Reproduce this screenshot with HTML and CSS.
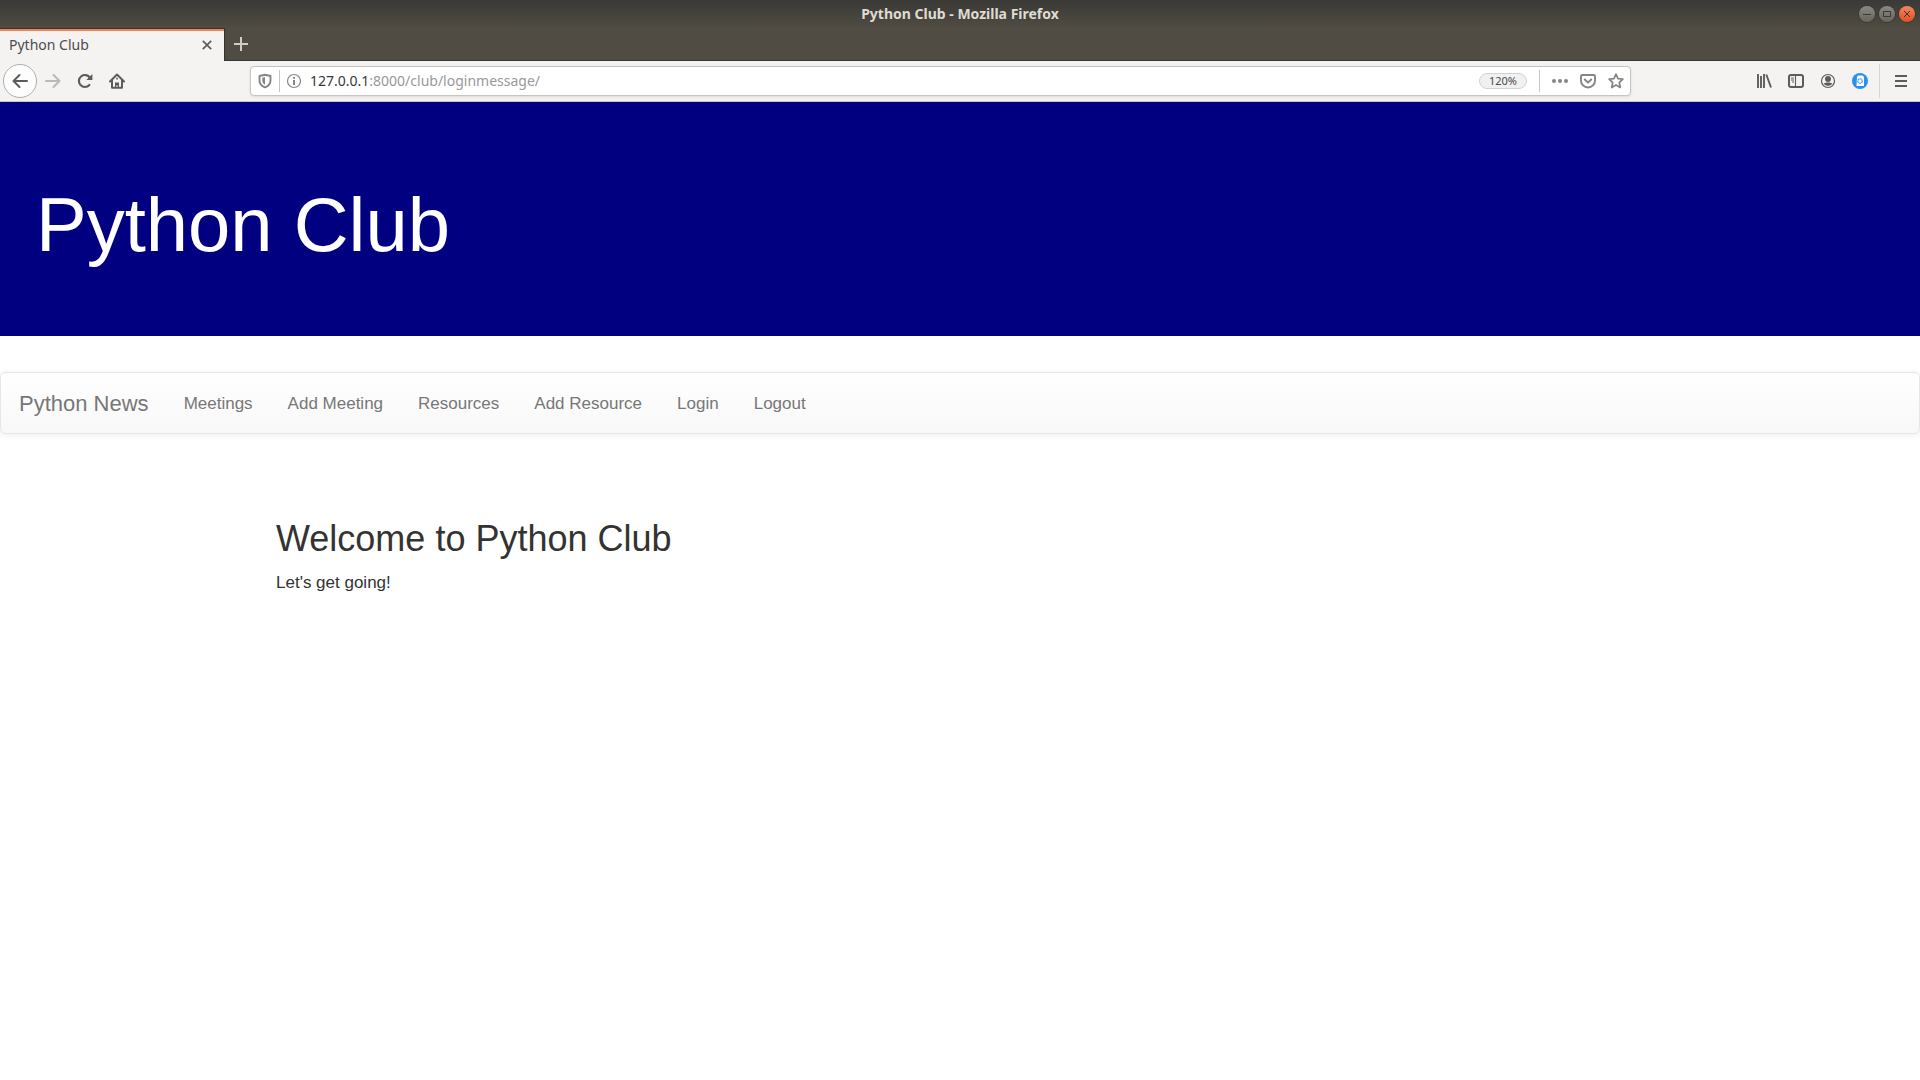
FILE: index.html
```html
<!DOCTYPE html>
<html lang="en">
<head>
<meta charset="utf-8">
<meta name="viewport" content="width=device-width, initial-scale=1">
<title>Python Club</title>
<link rel="stylesheet" href="styles.css">
</head>
<body>
<div class="chrome">
  <div class="titlebar">
    <div class="window-title">Python Club - Mozilla Firefox</div>
    <div class="window-buttons">
      <button class="win" type="button" aria-label="Minimize"><svg viewBox="0 0 16 16"><path d="M4 8.5h8"/></svg></button>
      <button class="win" type="button" aria-label="Maximize"><svg viewBox="0 0 16 16"><path d="M4.5 5.5h7v5h-7z"/></svg></button>
      <button class="win win-close" type="button" aria-label="Close"><svg viewBox="0 0 16 16"><path d="M5 5l6 6M11 5l-6 6"/></svg></button>
    </div>
  </div>
  <div class="tabs">
    <div class="tab">
      <span class="tab-title">Python Club</span>
      <button class="icon-btn tab-close" type="button" aria-label="Close tab"><svg width="16" height="16" viewBox="0 0 16 16"><path d="M3.8 3.8l8.4 8.4M12.2 3.8l-8.4 8.4" stroke-width="1.7"/></svg></button>
    </div>
    <button class="icon-btn tab-new" type="button" aria-label="New tab"><svg width="16" height="16" viewBox="0 0 16 16"><path d="M8 1v14M1 8h14" stroke-width="2"/></svg></button>
  </div>
  <div class="toolbar">
    <div class="tools">
      <button class="icon-btn back" type="button" aria-label="Back"><svg width="16" height="16" viewBox="0 0 16 16"><path d="M15 8H1.5M7.5 2l-6 6 6 6" stroke-width="2" stroke-linecap="round" stroke-linejoin="round"/></svg></button>
      <button class="icon-btn tool" type="button" aria-label="Forward" disabled><svg width="16" height="16" viewBox="0 0 16 16"><path d="M1 8h13.500M8.500 2l6 6-6 6" stroke-width="2" stroke-linecap="round" stroke-linejoin="round"/></svg></button>
      <button class="icon-btn tool" type="button" aria-label="Reload"><svg width="16" height="16" viewBox="0 0 16 16"><path d="M12.400 12A6 6 0 1 1 13 4.800" stroke-width="2.200" stroke-linecap="round"/><path d="M15.400 1v6h-6z" fill="currentColor" stroke="none"/></svg></button>
      <button class="icon-btn tool" type="button" aria-label="Home"><svg width="16" height="16" viewBox="0 0 16 16"><path d="M1 8.500L8 1.500l7 7M3 7v7.800h10V7" stroke-width="2" stroke-linecap="round" stroke-linejoin="round"/><path d="M6 15V9.500h4V15H8.800v-2.500H7.200V15zM7.200 4.800h1.600v1.700H7.200z" fill="currentColor" stroke="none"/></svg></button>
    </div>
    <div class="urlbar">
      <button class="icon-btn shield" type="button" aria-label="Tracking protection"><svg width="14" height="16" viewBox="0 0 14 16"><path d="M7 1.800L12.500 3v4.500c0 3-2 5.500-5.500 6.900C3.500 13 1.500 10.500 1.500 7.500V3z" stroke-width="1.900" stroke-linejoin="round"/><path d="M7 4L4.300 4.700v3c0 1.700 1 3 2.700 4z" fill="currentColor" stroke="none"/></svg></button>
      <button class="icon-btn info" type="button" aria-label="Site information"><svg width="16" height="16" viewBox="0 0 16 16"><circle cx="8" cy="8" r="6.500" stroke-width="1.200"/><path d="M8 7v5M8 4v1.800" stroke-width="2"/></svg></button>
      <label class="host" for="address">127.0.0.1</label>
      <input class="address" id="address" type="text" value=":8000/club/loginmessage/" spellcheck="false">
      <button class="zoom" type="button">120%</button>
      <div class="page-actions">
        <button class="icon-btn action" type="button" aria-label="Page actions"><svg width="16" height="16" viewBox="0 0 16 16"><g fill="currentColor" stroke="none"><circle cx="2" cy="8" r="2"/><circle cx="8" cy="8" r="2"/><circle cx="14" cy="8" r="2"/></g></svg></button>
        <button class="icon-btn action" type="button" aria-label="Save to Pocket"><svg width="16" height="16" viewBox="0 0 16 16"><path d="M2.300 2h11.400c.8 0 1.300.5 1.300 1.300V7.500a7 7 0 0 1-14 0V3.300C1 2.500 1.500 2 2.300 2z" stroke-width="1.900"/><path d="M4.800 6.500L8 9.600l3.200-3.100" stroke-width="2" stroke-linecap="round" stroke-linejoin="round"/></svg></button>
        <button class="icon-btn action" type="button" aria-label="Bookmark this page"><svg width="16" height="16" viewBox="0 0 16 16"><path d="M8 1.200l2 4.500 4.900.5-3.600 3.300 1 5L8 12l-4.300 2.500 1-5L1.100 6.200 6 5.700z" stroke-width="1.700" stroke-linejoin="round"/></svg></button>
      </div>
    </div>
    <div class="tools">
      <button class="icon-btn tool" type="button" aria-label="Library"><svg width="16" height="16" viewBox="0 0 16 16"><path d="M2 1v14M5 3v12M8 1v14M10.300 1.500l4.700 13" stroke-width="1.900"/></svg></button>
      <button class="icon-btn tool" type="button" aria-label="Sidebars"><svg width="16" height="16" viewBox="0 0 16 16"><rect x="1" y="2" width="14" height="12" rx="2" stroke-width="2"/><path d="M7.500 2v12M3 5h3M3 7h3M4 9h2" stroke-width="1.100"/></svg></button>
      <button class="icon-btn tool" type="button" aria-label="Account"><svg width="16" height="16" viewBox="0 0 16 16"><circle cx="8" cy="8" r="6.500" stroke-width="1.200"/><circle cx="8" cy="6" r="3" fill="currentColor" stroke="none"/><path d="M3.500 10.200c1 .2 2-.5 2.800-.7h3.400c.8.200 1.800.9 2.800.7A5 5 0 0 1 3.500 10.200z" fill="currentColor" stroke="none"/></svg></button>
      <button class="icon-btn tool" type="button" aria-label="Extension"><svg width="16" height="16" viewBox="0 0 16 16"><circle cx="8" cy="8" r="8" fill="#2b91ee" stroke="none"/><path d="M5 4l1-1.500h4.500L12 4v9H4.500z" fill="#fff" stroke="none"/><circle cx="8" cy="8" r="2.200" stroke="#2b91ee" stroke-width="1.100" stroke-dasharray="1.800 .5"/></svg></button>
    </div>
    <button class="icon-btn menu" type="button" aria-label="Open menu"><svg width="16" height="16" viewBox="0 0 16 16"><path d="M2 3h12M2 8h12M2 13h12" stroke-width="2"/></svg></button>
  </div>
</div>

<header class="jumbotron">
  <h1>Python Club</h1>
</header>
<nav class="navbar">
  <a class="brand" href="#">Python News</a>
  <a href="#">Meetings</a>
  <a href="#">Add Meeting</a>
  <a href="#">Resources</a>
  <a href="#">Add Resource</a>
  <a href="#">Login</a>
  <a href="#">Logout</a>
</nav>
<main class="container">
  <h2>Welcome to Python Club</h2>
  <p>Let's get going!</p>
</main>
</body>
</html>
```
FILE: styles.css
```css
* { box-sizing: border-box; }

body {
  margin: 0;
  background: #fff;
  color: #333;
  font: 17px/24px "Liberation Sans", Arial, sans-serif;
}

svg { display: block; fill: none; stroke: currentColor; }

button { font: inherit; color: inherit; padding: 0; border: 0; background: none; }

/* Browser window */
.chrome {
  font: 14px/20px "Noto Sans", sans-serif;
  background: linear-gradient(#3a3935, #504c43 28px);
}

.titlebar {
  display: grid;
  grid-template-columns: 1fr auto 1fr;
  align-items: center;
  height: 28px;
  padding: 0 5px;
}

.window-title { grid-column: 2; color: #dfdbd2; font-weight: 700; }

.window-buttons { display: flex; gap: 4px; justify-content: flex-end; }

.win {
  width: 16px;
  height: 16px;
  border-radius: 50%;
  color: #3a3935;
  background: linear-gradient(#8b8982, #66645d);
  box-shadow: 0 0 0 1px #3a3935;
}

.win-close { background: linear-gradient(#f58561, #e2501f); }

.icon-btn { display: grid; place-items: center; flex: none; }

.tabs { display: flex; height: 33px; border-bottom: 1px solid #3a3632; }

.tab {
  display: flex;
  align-items: center;
  justify-content: space-between;
  width: 225px;
  margin-bottom: -1px;
  padding: 0 9px;
  background: #f4f3f1;
  background-clip: padding-box;
  border-top: 1px solid #35332f;
  border-right: 1px solid #35332f;
  box-shadow: inset 0 2px #f08459;
  color: #4c4c4c;
}

.tab-close { color: #5c5c5c; }

.tab-new { width: 32px; color: #cfccc5; }

.toolbar {
  display: flex;
  align-items: center;
  height: 41px;
  padding-left: 3px;
  background: #f4f3f1;
  border-bottom: 1px solid #cac7c3;
  color: #5c5c5c;
}

.tools { display: flex; align-items: center; }

.back {
  width: 34px;
  height: 34px;
  border: 1px solid #b0aeab;
  border-radius: 50%;
  background: #fdfdfd;
}

.tool { width: 32px; height: 32px; }

.tool:disabled { color: #bab9b7; }

.urlbar {
  display: flex;
  align-items: center;
  flex: 1;
  min-width: 0;
  height: 30px;
  margin: 0 117px;
  border: 1px solid #c8c4bf;
  border-radius: 4px;
  background: #fff;
  box-shadow: 0 1px 3px #0000001a;
  color: #858585;
}

.shield { width: 29px; height: 22px; border-right: 1px solid #c4c4c4; }

.info { width: 28px; margin-right: 2px; }

.host { color: #383838; }

.address {
  flex: 1;
  min-width: 0;
  padding: 0;
  border: 0;
  outline: 0;
  background: none;
  color: #999;
  font: inherit;
}

.zoom {
  width: 48px;
  height: 16px;
  border: 1px solid #d2d2d2;
  border-radius: 8px;
  background: #f0f0f0;
  color: #4a4a4a;
  font-size: 11px;
  line-height: 14px;
}

.page-actions {
  display: flex;
  align-items: center;
  height: 22px;
  margin-left: 12px;
  padding-left: 6px;
  border-left: 1px solid #c8c8c8;
}

.action { width: 28px; }

.menu {
  width: 41px;
  height: 34px;
  margin-left: 3px;
  padding-left: 2px;
  border-left: 1px solid #d8d6d3;
}

/* Page */
.jumbotron {
  padding: 81px 36px 69px;
  margin-bottom: 36px;
  background: #000080;
  color: #fff;
}

h1, h2 { margin: 0; font-weight: 400; }

h1 { font-size: 76px; line-height: 84px; }

.navbar {
  display: flex;
  flex-wrap: wrap;
  align-items: center;
  min-height: 62px;
  border: 1px solid #e7e7e7;
  border-radius: 5px;
  background: linear-gradient(#fff, #f8f8f8);
  box-shadow: 0 1px 6px #00000013;
}

.navbar a { padding: 19px 18px 17px 17px; color: #777; text-decoration: none; }

.navbar .brand { padding-left: 18px; font-size: 22px; }

.container {
  max-width: 1404px;
  margin: 85px auto 0;
  padding: 0 18px;
}

h2 { font-size: 36px; line-height: 40px; }

p { margin: 12px 0; }
```
